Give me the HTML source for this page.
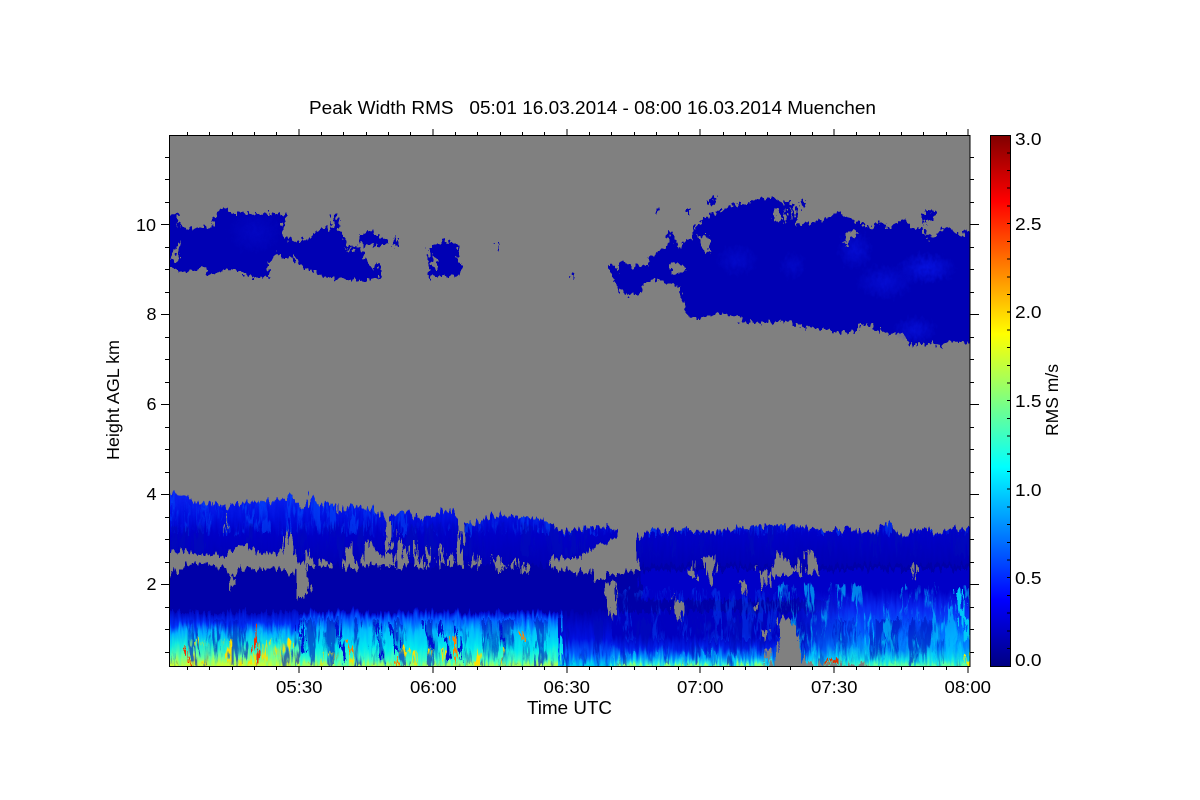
<!DOCTYPE html>
<html><head><meta charset="utf-8"><title>Peak Width RMS</title>
<style>html,body{margin:0;padding:0;background:#fff}svg{display:block}text{font-family:"Liberation Sans",sans-serif;fill:#000;font-size:17.5px}</style></head>
<body>
<svg width="1200" height="800" viewBox="0 0 1200 800" xmlns="http://www.w3.org/2000/svg">
<defs>
<linearGradient id="cb" x1="0" y1="1" x2="0" y2="0">
<stop offset="0" stop-color="#000083"/><stop offset=".125" stop-color="#0000ff"/><stop offset=".375" stop-color="#00ffff"/><stop offset=".625" stop-color="#ffff00"/><stop offset=".875" stop-color="#ff0000"/><stop offset="1" stop-color="#800000"/>
</linearGradient>
<linearGradient id="up" gradientUnits="userSpaceOnUse" x1="0" y1="494" x2="0" y2="566">
<stop offset="0" stop-color="#0820f0"/><stop offset=".3" stop-color="#0010e0"/><stop offset=".55" stop-color="#0000c8"/><stop offset="1" stop-color="#0000b4"/>
</linearGradient>
<linearGradient id="gA" gradientUnits="userSpaceOnUse" x1="0" y1="610" x2="0" y2="666">
<stop offset="0" stop-color="#0000b8"/><stop offset=".25" stop-color="#0030f8"/><stop offset=".42" stop-color="#00b0ff"/><stop offset=".6" stop-color="#10e8e0"/><stop offset=".82" stop-color="#60ffa0"/><stop offset="1" stop-color="#c8ff38"/>
</linearGradient>
<linearGradient id="gB" gradientUnits="userSpaceOnUse" x1="0" y1="612" x2="0" y2="666">
<stop offset="0" stop-color="#0000c8"/><stop offset=".12" stop-color="#0050ff"/><stop offset=".35" stop-color="#00b8ff"/><stop offset=".65" stop-color="#00e8f0"/><stop offset=".9" stop-color="#40ffc0"/><stop offset="1" stop-color="#a0ff60"/>
</linearGradient>
<linearGradient id="gC" gradientUnits="userSpaceOnUse" x1="0" y1="612" x2="0" y2="666">
<stop offset="0" stop-color="#0000b0"/><stop offset=".5" stop-color="#0010e0"/><stop offset=".8" stop-color="#0060ff"/><stop offset="1" stop-color="#00d0f0"/>
</linearGradient>
<linearGradient id="gD" gradientUnits="userSpaceOnUse" x1="0" y1="636" x2="0" y2="666">
<stop offset="0" stop-color="#0000c0"/><stop offset=".4" stop-color="#0020e8"/><stop offset=".72" stop-color="#0090ff"/><stop offset=".92" stop-color="#30f0d8"/><stop offset="1" stop-color="#80ff80"/>
</linearGradient>
<linearGradient id="gE" gradientUnits="userSpaceOnUse" x1="0" y1="590" x2="0" y2="666">
<stop offset="0" stop-color="#0000c8"/><stop offset=".25" stop-color="#0828f0"/><stop offset=".55" stop-color="#0060ff"/><stop offset=".75" stop-color="#0088ff"/><stop offset=".92" stop-color="#10e0e8"/><stop offset="1" stop-color="#60ffa0"/>
</linearGradient>
<linearGradient id="fadeL" gradientUnits="userSpaceOnUse" x1="790" y1="0" x2="850" y2="0">
<stop offset="0" stop-color="#fff" stop-opacity="0"/><stop offset="1" stop-color="#fff" stop-opacity="1"/>
</linearGradient>
<mask id="mE" maskUnits="userSpaceOnUse" x="780" y="580" width="200" height="90"><rect x="780" y="580" width="200" height="90" fill="url(#fadeL)"/></mask>
<radialGradient id="blob"><stop offset="0" stop-color="#0a1cf8" stop-opacity=".85"/><stop offset="1" stop-color="#0a1cf8" stop-opacity="0"/></radialGradient>

<filter id="nDark" x="0" y="0" width="100%" height="100%" color-interpolation-filters="sRGB">
<feTurbulence type="fractalNoise" baseFrequency="0.11 0.012" numOctaves="3" seed="7"/>
<feColorMatrix values="0 0 0 0 0  0 0 0 0 .05  0 0 0 0 .72  7 0 0 0 -3.6"/>
</filter>
<filter id="nBright" x="0" y="0" width="100%" height="100%" color-interpolation-filters="sRGB">
<feTurbulence type="fractalNoise" baseFrequency="0.14 0.015" numOctaves="3" seed="21"/>
<feColorMatrix values="0 0 0 0 0  0 0 0 0 .35  0 0 0 0 1  7 0 0 0 -3.6"/>
</filter>
<filter id="nYel" x="0" y="0" width="100%" height="100%" color-interpolation-filters="sRGB">
<feTurbulence type="fractalNoise" baseFrequency="0.16 0.03" numOctaves="2" seed="11"/>
<feColorMatrix values="0 0 0 0 1  0 0 0 0 .88  0 0 0 0 0  9 0 0 0 -5.5"/>
</filter>
<filter id="nCyan" x="0" y="0" width="100%" height="100%" color-interpolation-filters="sRGB">
<feTurbulence type="fractalNoise" baseFrequency="0.13 0.018" numOctaves="3" seed="3"/>
<feColorMatrix values="0 0 0 0 0  0 0 0 0 .85  0 0 0 0 1  7 0 0 0 -3.9"/>
</filter>
<filter id="comb" filterUnits="userSpaceOnUse" x="150" y="480" width="840" height="210" color-interpolation-filters="sRGB">
<feTurbulence type="fractalNoise" baseFrequency="0.33 0.05" numOctaves="2" seed="5" result="n"/>
<feDisplacementMap in="SourceGraphic" in2="n" scale="16" xChannelSelector="G" yChannelSelector="R"/>
</filter>
<filter id="rag" filterUnits="userSpaceOnUse" x="150" y="180" width="840" height="180" color-interpolation-filters="sRGB">
<feTurbulence type="fractalNoise" baseFrequency="0.28 0.18" numOctaves="2" seed="9" result="n"/>
<feDisplacementMap in="SourceGraphic" in2="n" scale="12" xChannelSelector="G" yChannelSelector="R"/>
</filter>

<clipPath id="low">
<polygon points="150,494 187,495 193,502 222,503 223,508 253,502 277,500 292,497 300,508 307,507 313,492 317,505 337,503 340,513 350,505 372,510 383,517 387,522 390,513 407,512 420,520 443,510 455,512 460,523 475,523 497,515 537,518 550,525 565,532 580,530 590,527 608,527 620,533 620,548 637,548 637,542 643,530 680,530 727,532 740,527 780,525 833,530 857,530 867,535 888,523 902,537 920,530 933,532 957,527 990,533 990,690 150,690"/>
</clipPath>
<clipPath id="plot"><rect x="170" y="136" width="800" height="530"/></clipPath>
</defs>

<rect width="1200" height="800" fill="#fff"/>
<rect x="169" y="135" width="801" height="531" fill="#808080"/>

<g clip-path="url(#plot)">
<g filter="url(#comb)">
<g clip-path="url(#low)" shape-rendering="crispEdges">
<rect x="150" y="490" width="840" height="80" fill="url(#up)"/>
<rect x="150" y="565" width="840" height="50" fill="#0000a8"/>
<rect x="640" y="570" width="350" height="30" fill="#0000c8"/>
<rect x="150" y="612" width="150" height="78" fill="url(#gA)"/>
<rect x="300" y="612" width="260" height="78" fill="url(#gB)"/>
<rect x="560" y="612" width="52" height="78" fill="url(#gC)"/>
<rect x="612" y="612" width="378" height="78" fill="#0000c0"/>
<rect x="612" y="636" width="378" height="54" fill="url(#gD)"/>
<rect x="780" y="590" width="210" height="100" fill="url(#gE)" mask="url(#mE)"/>
<rect x="170" y="525" width="800" height="30" filter="url(#nDark)" opacity=".55"/>
<rect x="170" y="494" width="800" height="40" filter="url(#nBright)" opacity=".5"/>
<rect x="612" y="590" width="170" height="50" filter="url(#nBright)" opacity=".4"/>
<rect x="170" y="620" width="800" height="46" filter="url(#nDark)" opacity=".6"/>
<rect x="170" y="640" width="130" height="26" filter="url(#nYel)"/>
<rect x="300" y="650" width="260" height="16" filter="url(#nYel)"/>
<rect x="780" y="585" width="190" height="81" filter="url(#nCyan)" opacity=".6"/>
<rect x="612" y="652" width="170" height="14" filter="url(#nCyan)" opacity=".6"/>
<g fill="none" stroke-width="3">
<path d="M440 622L450 662M455 625L461 660M425 622L433 650M336 625L345 660M376 625L382 660M300 620L305 650M500 622L505 650M392 625L398 655" stroke="#0010d0"/>
<path d="M254 625L258 666M186 648L190 666" stroke="#f03000" stroke-width="2"/>
<path d="M453 634L456 664M347 640L353 655M520 632L524 640M395 660L400 666" stroke="#ff8000" stroke-width="2"/>
<path d="M958 590L968 640" stroke="#00c8f8" stroke-width="5"/>
<path d="M966 654L968 666" stroke="#f0f000" stroke-width="3"/>
<path d="M826 661L830 661M832 661L838 661" stroke="#e03000" stroke-width="4"/>
</g>
</g>

<g fill="#808080" shape-rendering="crispEdges">
<polygon points="150,550 193,552 227,557 237,547 250,545 257,552 282,552 288,528 298,560 308,568 309,590 307,597 297,598 297,573 257,568 240,567 232,578 222,567 200,563 182,567 170,578 150,578"/>
<polygon points="232,578 236,578 231,593 229,585"/>
<polygon points="308,549 315,566 303,566"/>
<polygon points="322,558 334,567 318,568"/>
<polygon points="352,542 342,568 357,568"/>
<polygon points="368,540 360,565 387,563 380,555"/>
<polygon points="386,548 395,566 382,566"/>
<polygon points="387,513 389,513 392,548 386,548"/>
<polygon points="400,530 404,566 396,566"/>
<polygon points="420,556 424,568 416,568"/>
<polygon points="460,523 463,523 463,566 456,566"/>
<polygon points="405,545 407,545 409,566 403,566"/>
<polygon points="415,540 417,540 418,566 413,566"/>
<polygon points="428,550 430,550 432,566 426,566"/>
<polygon points="440,545 442,545 443,566 439,566"/>
<polygon points="449,552 451,552 452,566 447,566"/>
<polygon points="472,552 474,552 476,566 470,566"/>
<polygon points="480,556 482,556 484,566 478,566"/>
<polygon points="497,556 500,556 504,572 495,570"/>
<polygon points="514,558 516,558 518,570 512,568"/>
<polygon points="225,513 227,513 226,530 225,530"/>
<polygon points="490,558 498,572 508,566"/>
<polygon points="525,562 530,576 522,570"/>
<polygon points="550,558 575,558 590,563 590,572 570,573 552,566"/>
<polygon points="580,556 620,535 637,542 640,572 607,573 606,580 595,580 588,570"/>
<polygon points="608,582 617,582 613,622 605,595"/>
<polygon points="672,597 683,603 680,625"/>
<polygon points="702,557 717,557 712,587"/>
<polygon points="693,560 697,580 690,575"/>
<polygon points="740,582 746,582 747,595 743,595"/>
<polygon points="752,603 757,603 757,608 752,608"/>
<polygon points="758,567 770,573 765,592"/>
<polygon points="777,550 797,573 770,577"/>
<polygon points="800,558 804,575 797,575"/>
<polygon points="807,553 815,553 817,573 807,573"/>
<polygon points="777,623 782,615 790,620 800,643 802,662 813,662 813,680 767,680 777,657 780,637"/>
<rect x="767" y="664" width="100" height="10"/>
<polygon points="762,630 768,630 765,640"/>
<polygon points="912,566 916,566 915,580"/>
<polygon points="766,648 770,648 768,665"/>
</g>
</g>

<g filter="url(#rag)">
<g fill="#0000b4" shape-rendering="crispEdges">
<polygon points="150,214 177,214 178,228 181,221 183,228 213,228 215,218 220,207 225,207 230,213 286,214 286,222 283,222 283,237 292,240 298,243 303,237 308,242 317,230 325,228 332,230 333,215 337,214 342,237 345,240 348,247 357,245 363,253 372,270 378,263 383,277 375,278 363,281 332,278 320,275 303,267 292,257 282,259 277,253 272,262 268,263 269,276 258,278 247,276 235,268 210,275 203,268 183,272 175,270 150,258"/>
<polygon points="358,235 366,234 368,231 372,230 375,236 385,238 387,245 373,245 368,244 365,248 360,242"/>
<rect x="394" y="238" width="4" height="9"/>
<polygon points="428,250 436,245 441,244 443,239 447,239 449,243 457,244 458,262 462,265 462,273 452,276 440,276 429,276"/>
<rect x="497" y="242" width="2" height="7"/>
<rect x="572" y="273" width="2" height="8"/>
<polygon points="610,265 615,265 618,273 620,263 627,263 632,268 640,265 648,265 650,257 658,253 668,245 668,230 671,230 680,250 683,242 692,240 693,230 698,223 717,212 728,207 737,204 750,204 758,198 777,198 777,202 795,203 797,225 810,223 827,218 840,212 845,218 862,223 870,229 880,221 887,228 905,218 910,228 922,228 928,238 933,237 940,228 953,228 958,238 967,230 985,230 985,346 960,342 947,340 942,348 933,343 910,345 902,333 890,335 863,323 857,332 833,332 810,327 800,327 787,320 773,323 740,322 740,316 718,314 700,318 690,318 685,313 685,303 680,297 680,287 670,284 662,282 650,278 642,287 640,295 636,295 630,293 628,297 620,290 610,273"/>
<polygon points="708,198 713,195 715,195 714,205 709,205"/>
<rect x="656" y="209" width="3" height="5"/>
<rect x="687" y="207" width="2" height="7"/>
<rect x="800" y="200" width="5" height="8"/>
<polygon points="923,213 930,209 935,210 934,219 926,220 925,224 924,220"/>
</g>
<g>
<ellipse cx="737" cy="260" rx="22" ry="16" fill="url(#blob)" opacity=".35"/>
<ellipse cx="793" cy="266" rx="14" ry="14" fill="url(#blob)" opacity=".3"/>
<ellipse cx="855" cy="250" rx="18" ry="20" fill="url(#blob)" opacity=".5"/>
<ellipse cx="885" cy="282" rx="30" ry="18" fill="url(#blob)" opacity=".5"/>
<ellipse cx="927" cy="268" rx="30" ry="16" fill="url(#blob)" opacity=".75"/>
<ellipse cx="915" cy="330" rx="22" ry="14" fill="url(#blob)" opacity=".55"/>
<ellipse cx="255" cy="232" rx="28" ry="22" fill="url(#blob)" opacity=".25"/>
</g>
<g fill="#808080" shape-rendering="crispEdges">
<polygon points="697,235 709,236 710,252 703,250"/>
<polygon points="773,207 781,207 780,222 774,222"/>
<rect x="784" y="210" width="2" height="14"/><rect x="790" y="206" width="2" height="12"/>
<polygon points="668,264 684,264 684,274 672,272"/>
<polygon points="172,262 178,262 180,241 175,248"/>
<polygon points="344,250 356,248 349,252"/>
<polygon points="434,255 438,262 436,270 432,262"/>
<polygon points="846,231 858,232 845,245"/>
</g>
</g>
</g>

<g stroke="#000" stroke-width="1.3" fill="none" shape-rendering="crispEdges">
<rect x="169.5" y="135.5" width="800.5" height="531"/>
<path d="M161 224.5H169M161 314.5H169M161 404.5H169M161 494.5H169M161 584.5H169
M979 224.5H970M979 314.5H970M979 404.5H970M979 494.5H970M979 584.5H970
M165 157.5H169M165 179.5H169M165 202.5H169M165 247.5H169M165 269.5H169M165 292.5H169M165 337.5H169M165 359.5H169M165 382.5H169M165 427.5H169M165 449.5H169M165 472.5H169M165 517.5H169M165 539.5H169M165 562.5H169M165 607.5H169M165 629.5H169M165 652.5H169
M974 157.5H970M974 179.5H970M974 202.5H970M974 247.5H970M974 269.5H970M974 292.5H970M974 337.5H970M974 359.5H970M974 382.5H970M974 427.5H970M974 449.5H970M974 472.5H970M974 517.5H970M974 539.5H970M974 562.5H970M974 607.5H970M974 629.5H970M974 652.5H970"/>
<path d="M299 135V129M433 135V129M567 135V129M700 135V129M834 135V129M968 135V129
M299 667V673M433 667V673M567 667V673M700 667V673M834 667V673M968 667V673
M187.5 135V132M209.5 135V132M232.5 135V132M254.5 135V132M276.5 135V132M321.5 135V132M343.5 135V132M366.5 135V132M388.5 135V132M410.5 135V132M455.5 135V132M477.5 135V132M500.5 135V132M522.5 135V132M544.5 135V132M589.5 135V132M611.5 135V132M634.5 135V132M656.5 135V132M678.5 135V132M723.5 135V132M745.5 135V132M767.5 135V132M790.5 135V132M812.5 135V132M856.5 135V132M879.5 135V132M901.5 135V132M923.5 135V132M946.5 135V132
M187.5 667V670M209.5 667V670M232.5 667V670M254.5 667V670M276.5 667V670M321.5 667V670M343.5 667V670M366.5 667V670M388.5 667V670M410.5 667V670M455.5 667V670M477.5 667V670M500.5 667V670M522.5 667V670M544.5 667V670M589.5 667V670M611.5 667V670M634.5 667V670M656.5 667V670M678.5 667V670M723.5 667V670M745.5 667V670M767.5 667V670M790.5 667V670M812.5 667V670M856.5 667V670M879.5 667V670M901.5 667V670M923.5 667V670M946.5 667V670"/>
</g>

<rect x="990" y="135" width="20.5" height="531" fill="url(#cb)"/>
<g stroke="#000" stroke-width="1.3" fill="none" shape-rendering="crispEdges">
<rect x="990.5" y="135.5" width="20" height="531"/>
<path d="M1007 153H1010M1007 170.5H1010M1007 188H1010M1007 206H1010M1007 223.5H1010M1007 241.5H1010M1007 259H1010M1007 277H1010M1007 294.5H1010M1007 312H1010M1007 330H1010M1007 347.5H1010M1007 365.5H1010M1007 383H1010M1007 400.5H1010M1007 418.5H1010M1007 436H1010M1007 454H1010M1007 471.5H1010M1007 489H1010M1007 507H1010M1007 524.5H1010M1007 542.5H1010M1007 560H1010M1007 577.5H1010M1007 595.5H1010M1007 613H1010M1007 631H1010M1007 648.5H1010"/>
</g>

<text x="309" y="114" style="font-size:18px;white-space:pre" xml:space="preserve" textLength="567" lengthAdjust="spacingAndGlyphs">Peak Width RMS   05:01 16.03.2014 - 08:00 16.03.2014 Muenchen</text>

<text x="276" y="693" textLength="46.5" lengthAdjust="spacingAndGlyphs">05:30</text>
<text x="410" y="693" textLength="46.5" lengthAdjust="spacingAndGlyphs">06:00</text>
<text x="543.5" y="693" textLength="46.5" lengthAdjust="spacingAndGlyphs">06:30</text>
<text x="677" y="693" textLength="46.5" lengthAdjust="spacingAndGlyphs">07:00</text>
<text x="811" y="693" textLength="46.5" lengthAdjust="spacingAndGlyphs">07:30</text>
<text x="944.5" y="693" textLength="46.5" lengthAdjust="spacingAndGlyphs">08:00</text>
<text x="527" y="714" style="font-size:18px" textLength="85" lengthAdjust="spacingAndGlyphs">Time UTC</text>

<text x="136" y="231" textLength="20" lengthAdjust="spacingAndGlyphs">10</text>
<text x="146.5" y="320" textLength="10" lengthAdjust="spacingAndGlyphs">8</text>
<text x="146.5" y="410" textLength="10" lengthAdjust="spacingAndGlyphs">6</text>
<text x="146.5" y="500" textLength="10" lengthAdjust="spacingAndGlyphs">4</text>
<text x="146.5" y="590" textLength="10" lengthAdjust="spacingAndGlyphs">2</text>

<text transform="translate(119,460) rotate(-90)" x="0" y="0" textLength="120" lengthAdjust="spacingAndGlyphs">Height AGL km</text>
<text transform="translate(1058,436) rotate(-90)" x="0" y="0" textLength="72" lengthAdjust="spacingAndGlyphs">RMS m/s</text>

<text x="1015" y="145" textLength="26.5" lengthAdjust="spacingAndGlyphs">3.0</text>
<text x="1015" y="230" textLength="26.5" lengthAdjust="spacingAndGlyphs">2.5</text>
<text x="1015" y="318" textLength="26.5" lengthAdjust="spacingAndGlyphs">2.0</text>
<text x="1015" y="407" textLength="26.5" lengthAdjust="spacingAndGlyphs">1.5</text>
<text x="1015" y="496" textLength="26.5" lengthAdjust="spacingAndGlyphs">1.0</text>
<text x="1015" y="584" textLength="26.5" lengthAdjust="spacingAndGlyphs">0.5</text>
<text x="1015" y="666" textLength="26.5" lengthAdjust="spacingAndGlyphs">0.0</text>
</svg>
</body></html>
